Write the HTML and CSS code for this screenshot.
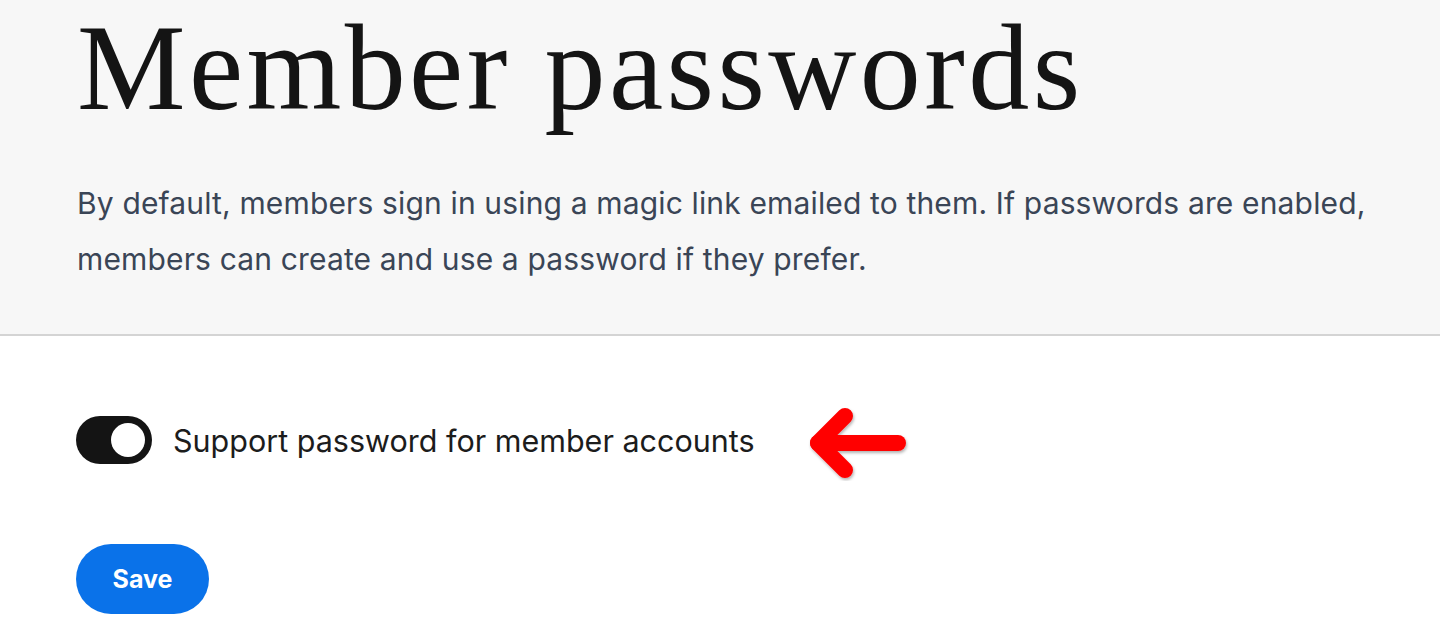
FILE: index.html
```html
<!DOCTYPE html>
<html>
<head>
<meta charset="utf-8">
<link rel="stylesheet" href="styles.css">
</head>
<body>
<header class="hero">
  <h1 class="title">Member passwords</h1>
  <p class="desc">By default, members sign in using a magic link emailed to them. If passwords are enabled, members can create and use a password if they prefer.</p>
</header>
<main class="content">
  <div class="row">
    <label class="toggle-row">
      <span class="toggle"><span class="knob"></span></span>
      <span class="label">Support password for member accounts</span>
    </label>
    <svg class="arrow" width="104" height="80" viewBox="0 0 104 80">
      <defs>
        <filter id="sh" x="-20%" y="-20%" width="140%" height="140%">
          <feDropShadow dx="1" dy="2" stdDeviation="1.5" flood-color="#000" flood-opacity="0.3"/>
        </filter>
      </defs>
      <g filter="url(#sh)" fill="none" stroke="#ff0000" stroke-width="16" stroke-linecap="round" stroke-linejoin="round">
        <path d="M91 40 H11"/>
        <path d="M38 13 L11 40 L38 67"/>
      </g>
    </svg>
  </div>
  <button class="save">Save</button>
</main>
</body>
</html>
```
FILE: styles.css
```css
html, body {
  margin: 0;
  padding: 0;
  background: #ffffff;
}
body {
  font-family: Inter, "Noto Sans", sans-serif;
}
.hero {
  display: flow-root;
  background: #f7f7f7;
  border-bottom: 2px solid #d4d4d4;
  padding: 0 0 0 77px;
  height: 336px;
  box-sizing: border-box;
}
.title {
  font-family: "Liberation Serif", "DejaVu Serif", serif;
  font-weight: 400;
  font-size: 122px;
  line-height: 136px;
  color: #141414;
  margin: 0;
  letter-spacing: 3.4px;
}
.desc {
  margin: 39px 0 0 0;
  font-size: 30px;
  line-height: 56px;
  letter-spacing: 0.15px;
  color: #3a4556;
  max-width: 1340px;
}
.content {
  display: flow-root;
  padding: 80px 0 0 76px;
}
.row {
  display: flex;
  align-items: center;
  gap: 52px;
  margin-top: -19px;
}
.toggle-row {
  display: flex;
  align-items: center;
  gap: 21px;
}
.toggle {
  width: 76px;
  height: 48px;
  border-radius: 24px;
  background: #141414;
  display: flex;
  align-items: center;
  justify-content: flex-end;
  padding: 0 7px;
  box-sizing: border-box;
}
.knob {
  width: 34px;
  height: 34px;
  border-radius: 50%;
  background: #ffffff;
}
.label {
  font-size: 30.5px;
  color: #1c1c1c;
}
.arrow {
  display: block;
  margin-top: 6px;
}
.save {
  display: block;
  margin-top: 61px;
  width: 133px;
  height: 70px;
  border: none;
  border-radius: 35px;
  background: #0a72e9;
  color: #ffffff;
  font-family: Inter, "Noto Sans", sans-serif;
  font-weight: 700;
  font-size: 25px;
  cursor: pointer;
}
```
